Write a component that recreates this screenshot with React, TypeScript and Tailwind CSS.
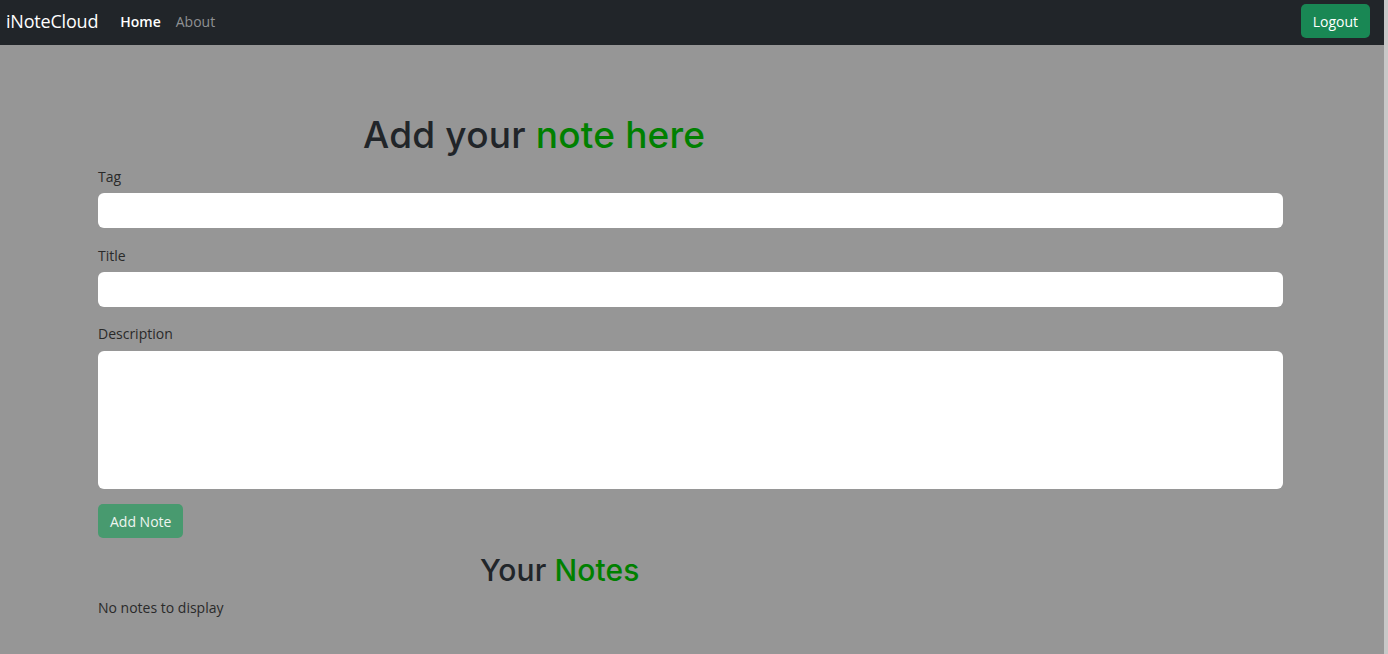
import React from "react";

const Navbar: React.FC = () => (
  <nav className="h-[45px] bg-[#212529] flex items-center justify-between pl-[6px] pr-[14px]">
    <div className="flex items-center">
      <a className="text-white text-[18px] mr-[22px] tracking-[-0.2px] pb-[3px]">iNoteCloud</a>
      <a className="text-white text-[14px] font-semibold mr-[15px] pb-[3px]">Home</a>
      <a className="text-[#8f9193] text-[14px] pb-[3px]">About</a>
    </div>
    <button className="bg-[#198754] text-white text-[14px] rounded-[5px] h-[34px] px-[12px] mb-[3px]">Logout</button>
  </nav>
);

export default function App() {
  return (
    <div className="min-h-[654px] bg-[#969696] font-['Open_Sans','Noto_Sans',sans-serif] text-[#212529] flex">
      <div className="flex-1">
        <Navbar />
        <div className="w-[1185px] ml-[98px] pt-[68px]">
          <h2 className="font-['Inter',sans-serif] font-medium text-[37px] leading-[44px] ml-[265px] tracking-[0.2px]">
            Add your <span className="text-[#008000]">note here</span>
          </h2>
          <form className="mt-[8px]">
            <label className="block text-[14px] leading-[20px] text-[#2a2a2a] translate-y-[2px]">Tag</label>
            <input className="block w-full h-[35px] bg-white rounded-[6px] mt-[8px] outline-none" />
            <label className="block text-[14px] leading-[20px] mt-[16px] text-[#2a2a2a] translate-y-[2px]">Title</label>
            <input className="block w-full h-[35px] bg-white rounded-[6px] mt-[8px] outline-none" />
            <label className="block text-[14px] leading-[20px] mt-[16px] text-[#2a2a2a] translate-y-[1px]">Description</label>
            <textarea className="block w-full h-[138px] bg-white rounded-[6px] mt-[8px] outline-none resize-none" />
            <button
              type="button"
              className="mt-[15px] bg-[#489a6f] text-[#eef5f0] text-[14px] rounded-[5px] h-[34px] px-[12px]"
            >
              Add Note
            </button>
          </form>
          <h2 className="font-['Inter',sans-serif] font-medium text-[30px] leading-[36px] ml-[382px] mt-[14px] tracking-[0.1px]">
            Your <span className="text-[#008000]">Notes</span>
          </h2>
          <p className="text-[14px] mt-[9px] text-[#2a2a2a]">No notes to display</p>
        </div>
      </div>
      <div className="w-[4px] bg-[#c8c8c8]" />
    </div>
  );
}
